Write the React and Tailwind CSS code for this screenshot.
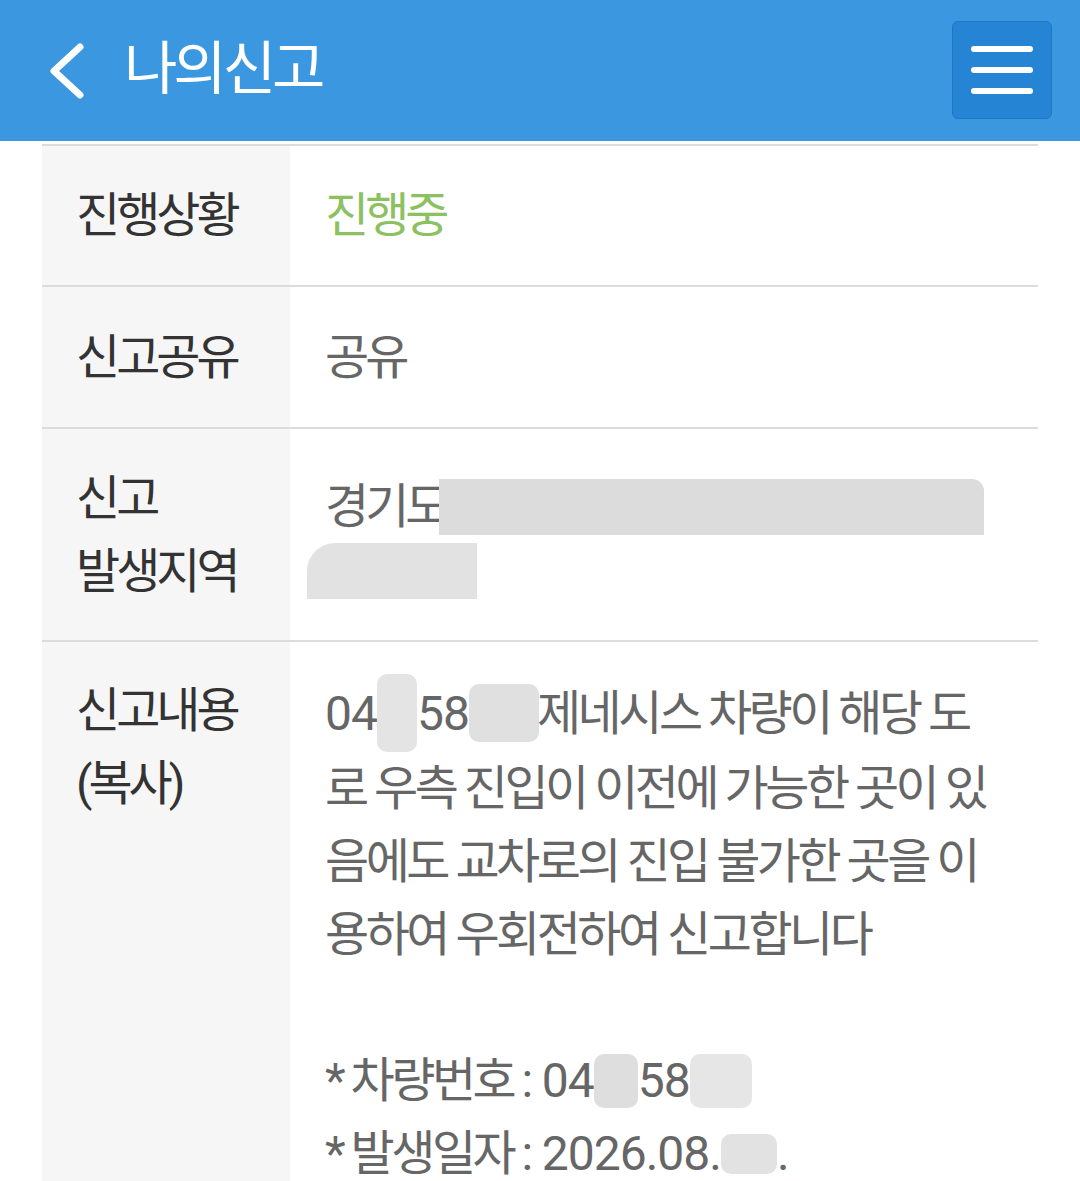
import React from "react";

const font = { fontFamily: '"Roboto", "Noto Sans CJK KR", sans-serif' };

function Blur({ w, h = 44, className = "" }) {
  return (
    <span
      className={`inline-block align-middle rounded-[10px] bg-[#d9d9d9] ${className}`}
      style={{ width: w, height: h }}
    />
  );
}

function Num({ children, className = "" }) {
  return <span className={`tracking-[-1px] ${className}`}>{children}</span>;
}

function Row({ label, children, className = "" }) {
  return (
    <div className={`flex border-b-2 border-[#dcdcdc] ${className}`}>
      <div className="w-[248px] shrink-0 bg-[#f6f6f6] pl-[34px] text-[#333] flex flex-col justify-center">
        {label}
      </div>
      <div className="flex-1 pl-[35px] text-[#666] flex flex-col justify-center">
        {children}
      </div>
    </div>
  );
}

export default function App() {
  return (
    <div className="w-[1080px] h-[1181px] overflow-hidden bg-white" style={font}>
      <header className="h-[141px] bg-[#3a97e0] flex items-center pl-[46px] pr-[28px]">
        <svg width="40" height="56" viewBox="0 0 40 56" className="shrink-0">
          <path d="M34 4 L8 28 L34 52" fill="none" stroke="white" strokeWidth="7" strokeLinecap="round" strokeLinejoin="round" />
        </svg>
        <h1 className="ml-[38px] text-white text-[58px] leading-none tracking-[-4px] mt-[-4px]">나의신고</h1>
        <div className="ml-auto w-[100px] h-[98px] mt-[-2px] rounded-[6px] bg-[#2684d4] border border-[#2276c0] flex flex-col items-center justify-center gap-[15px]">
          <span className="block w-[62px] h-[6px] rounded-full bg-white" />
          <span className="block w-[62px] h-[6px] rounded-full bg-white" />
          <span className="block w-[62px] h-[6px] rounded-full bg-white" />
        </div>
      </header>
      <div className="mx-[42px] mt-[3px] border-t-2 border-[#dcdcdc] text-[48px] leading-[73px] tracking-[-4px]">
        <Row label="진행상황" className="h-[141px]">
          <span className="text-[#8cc161]">진행중</span>
        </Row>
        <Row label="신고공유" className="h-[142px]">
          <span>공유</span>
        </Row>
        <Row
          className="h-[213px]"
          label={
            <>
              <div>신고</div>
              <div>발생지역</div>
            </>
          }
        >
          <div className="flex items-center">
            경기도
            <span className="inline-block h-[56px] w-[545px] ml-[-6px] bg-[#dcdcdc] rounded-tr-[12px]" />
          </div>
          <div className="flex items-center">
            <span className="inline-block h-[56px] w-[170px] ml-[-18px] bg-[#e2e2e2] rounded-tl-[28px]" />
          </div>
        </Row>
        <div className="flex h-[560px]">
          <div className="w-[248px] shrink-0 bg-[#f6f6f6] pl-[34px] pt-[32px] text-[#333]">
            <div>신고내용</div>
            <div>(복사)</div>
          </div>
          <div className="flex-1 pl-[35px] pt-[32px] text-[#666] whitespace-nowrap tracking-[-3.5px]">
            <div className="flex items-center">
              <Num>04</Num><Blur w={40} h={78} className="bg-[#e4e4e4]" /><Num>58</Num><Blur w={70} h={58} className="bg-[#e0e0e0]" />
              <span className="ml-[-2px]">제네시스 차량이 해당 도</span>
            </div>
            <div>로 우측 진입이 이전에 가능한 곳이 있</div>
            <div>음에도 교차로의 진입 불가한 곳을 이</div>
            <div>용하여 우회전하여 신고합니다</div>
            <div>&nbsp;</div>
            <div className="flex items-center">
              <span>* 차량번호 :</span><Num className="ml-[12px]">04</Num><Blur w={44} h={54} className="bg-[#dedede]" /><Num>58</Num><Blur w={62} h={54} className="bg-[#e6e6e6]" />
            </div>
            <div className="flex items-center">
              <span>* 발생일자 :</span><Num className="ml-[12px]">2026.08.</Num><Blur w={56} h={40} className="bg-[#e2e2e2]" />.
            </div>
          </div>
        </div>
      </div>
    </div>
  );
}
